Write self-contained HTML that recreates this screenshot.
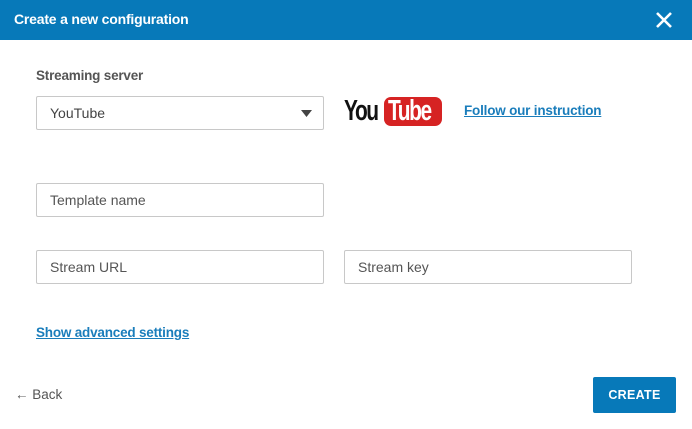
<!DOCTYPE html>
<html><head><style>
*{margin:0;padding:0;box-sizing:border-box}
body{width:692px;height:429px;background:#fff;font-family:"Liberation Sans",sans-serif;position:relative;overflow:hidden;color:#333}
.hdr{position:absolute;left:0;top:0;width:692px;height:40px;background:#0779b9;color:#fff;font-weight:bold;font-size:14px;line-height:38px;padding-left:14px;letter-spacing:-0.2px}
.x{position:absolute;right:18px;top:10px;width:20px;height:20px}
.lbl{position:absolute;left:36px;top:68px;font-size:13.5px;font-weight:bold;color:#555;letter-spacing:-0.2px}
.in{position:absolute;border:1px solid #c8c8c8;border-radius:2px;height:34px;width:288px;font-size:14px;line-height:32px;padding-left:13px;color:#555}
.lnk{position:absolute;color:#1a7dbb;font-weight:bold;font-size:13.5px;text-decoration:underline;letter-spacing:-0.2px}
.btn{position:absolute;left:593px;top:377px;width:83px;height:36px;background:#0779b9;color:#fff;font-weight:bold;font-size:12.5px;text-align:center;line-height:36px;border-radius:2px;letter-spacing:0.3px}
</style></head><body>
<div class="hdr">Create a new configuration</div>
<svg class="x" viewBox="0 0 20 20"><path d="M3 3L17 17M17 3L3 17" stroke="#fff" stroke-width="2.6"/></svg>
<div class="lbl">Streaming server</div>
<div class="in" style="left:36px;top:96px;color:#444">YouTube<svg style="position:absolute;right:11px;top:13px" width="11" height="7" viewBox="0 0 11 7"><path d="M0 0H11L5.5 7Z" fill="#444"/></svg></div>
<div style="position:absolute;left:344px;top:97px;height:29px;width:100px">
<span style="position:absolute;left:0;top:-3px;font-weight:bold;font-size:22px;letter-spacing:-1.5px;color:#111;transform:scale(0.95,1.3);transform-origin:left top;display:inline-block">You</span>
<div style="position:absolute;left:40px;top:0;width:58px;height:29px;background:#d62323;border-radius:7px;overflow:hidden"><span style="position:absolute;left:4px;top:-3px;color:#fff;font-weight:bold;font-size:22px;letter-spacing:-1.5px;transform:scale(0.95,1.3);transform-origin:left top;display:inline-block">Tube</span></div>
</div>
<div class="lnk" style="left:464px;top:103px">Follow our instruction</div>
<div class="in" style="left:36px;top:183px">Template name</div>
<div class="in" style="left:36px;top:250px">Stream URL</div>
<div class="in" style="left:344px;top:250px">Stream key</div>
<div class="lnk" style="left:36px;top:325px">Show advanced settings</div>
<div style="position:absolute;left:15px;top:387px;font-size:13.5px;color:#555">← Back</div>
<div class="btn">CREATE</div>
</body></html>
